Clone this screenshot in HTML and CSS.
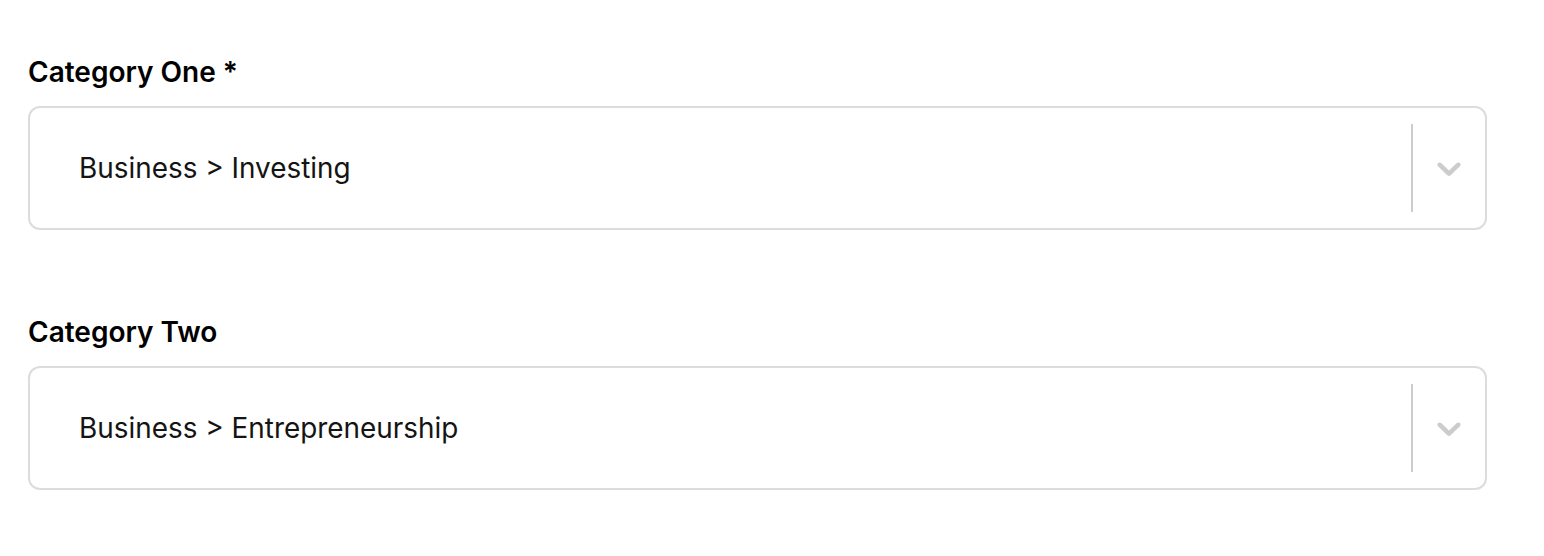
FILE: index.html
```html
<!DOCTYPE html>
<html lang="en">
<head>
  <meta charset="UTF-8">
  <title>Categories</title>
  <link rel="stylesheet" href="styles.css">
</head>
<body>

<div class="form">
  <!-- Category one -->
  <div class="field">
    <label class="field-label">Category One *</label>
    <div class="select">
      <div class="select-value">Business &gt; Investing</div>
      <span class="select-sep"></span>
      <div class="select-arrow">
        <svg viewBox="0 0 20 20" width="40" height="40"><path d="M4.516 7.548c0.436-0.446 1.043-0.481 1.576 0l3.908 3.747 3.908-3.747c0.533-0.481 1.141-0.446 1.574 0 0.436 0.445 0.408 1.197 0 1.615-0.406 0.418-4.695 4.502-4.695 4.502-0.217 0.223-0.502 0.335-0.787 0.335s-0.57-0.112-0.789-0.335c0 0-4.287-4.084-4.695-4.502s-0.436-1.170 0-1.615z"/></svg>
      </div>
    </div>
  </div>

  <!-- Category two -->
  <div class="field">
    <label class="field-label">Category Two</label>
    <div class="select">
      <div class="select-value">Business &gt; Entrepreneurship</div>
      <span class="select-sep"></span>
      <div class="select-arrow">
        <svg viewBox="0 0 20 20" width="40" height="40"><path d="M4.516 7.548c0.436-0.446 1.043-0.481 1.576 0l3.908 3.747 3.908-3.747c0.533-0.481 1.141-0.446 1.574 0 0.436 0.445 0.408 1.197 0 1.615-0.406 0.418-4.695 4.502-4.695 4.502-0.217 0.223-0.502 0.335-0.787 0.335s-0.57-0.112-0.789-0.335c0 0-4.287-4.084-4.695-4.502s-0.436-1.170 0-1.615z"/></svg>
      </div>
    </div>
  </div>
</div>

</body>
</html>
```

FILE: styles.css
```css
/* General Styling */
body {
  font-family: Inter, "Noto Sans", sans-serif;
  background-color: #ffffff;
  color: #111111;
  margin: 0;
}

.form {
  width: 1459px;
  padding: 55px 0 0 28px;
  display: flex;
  flex-direction: column;
  gap: 85px;
}

.field-label {
  display: block;
  font-size: 28px;
  font-weight: 600;
  line-height: 34px;
  margin-bottom: 17px;
  color: #000000;
}

.select {
  display: flex;
  align-items: center;
  height: 124px;
  box-sizing: border-box;
  border: 2px solid #dcdcdc;
  border-radius: 12px;
  padding-left: 49px;
}

.select-value {
  flex: 1;
  font-size: 27.9px;
  color: #141414;
}

.select-sep {
  align-self: stretch;
  width: 2px;
  margin: 16px 0;
  background-color: #cccccc;
}

.select-arrow {
  display: flex;
  padding: 0 16px;
}

.select-arrow svg {
  fill: #cccccc;
}
```
